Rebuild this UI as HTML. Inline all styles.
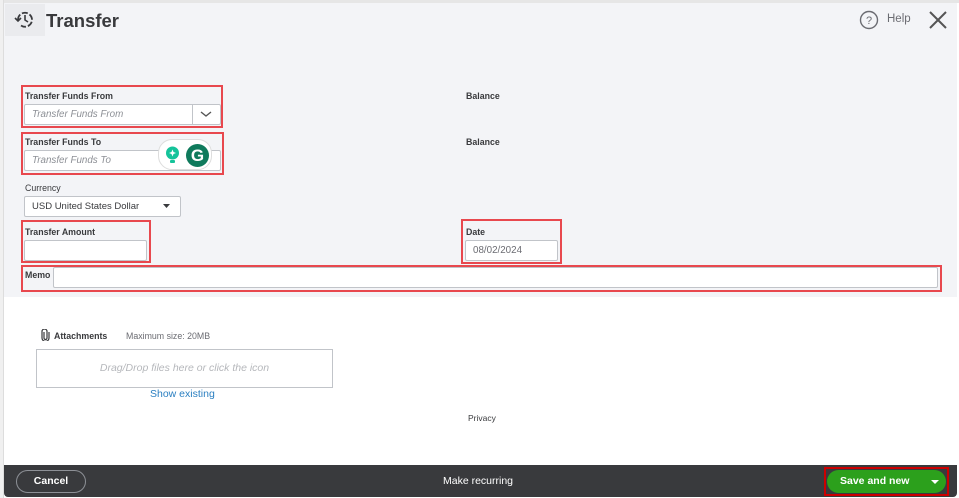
<!DOCTYPE html>
<html><head><meta charset="utf-8"><style>
*{box-sizing:border-box;margin:0;padding:0}
body{width:959px;height:498px;background:#fff;font-family:"Liberation Sans",sans-serif;position:relative;overflow:hidden;color:#393a3d}
.a{position:absolute;white-space:nowrap}
.top{left:4px;top:3px;width:953px;height:294px;background:#f3f4f7}
.lbl{font-size:8.8px;font-weight:bold;color:#393a3d}
.in{background:#fff;border:1px solid #c1c4c9;border-radius:2px}
.ph{font-size:9.8px;font-style:italic;color:#8d9096}
.red{border:2px solid #e8484e}
</style></head><body>
<div class="a" style="left:0;top:0;width:959px;height:3px;background:#e6e6e6"></div>
<div class="a" style="left:0;top:0;width:4px;height:498px;background:#f0f0f0;border-right:1px solid #ddd"></div>
<div class="a top"></div>
<div class="a" style="left:5px;top:4px;width:40px;height:32px;background:#eaebee"></div>
<svg class="a" style="left:14px;top:9px" width="22" height="20" viewBox="0 0 22 20"><path d="M4 11a7 7 0 1 1 3 5.5" fill="none" stroke="#393a3d" stroke-width="1.8" stroke-dasharray="6 2"/><path d="M11 6v5l3 2" fill="none" stroke="#393a3d" stroke-width="1.6"/><path d="M1 9l3 3 3-3" fill="none" stroke="#393a3d" stroke-width="1.6"/></svg>
<div class="a" style="left:46px;top:10px;font-size:18.5px;font-weight:bold;color:#393a3d">Transfer</div>
<svg class="a" style="left:859px;top:10px" width="20" height="20" viewBox="0 0 20 20"><circle cx="10" cy="10" r="8.5" fill="none" stroke="#6b6c72" stroke-width="1.4"/><text x="10" y="14" text-anchor="middle" font-size="11" font-family="Liberation Sans" fill="#6b6c72">?</text></svg>
<div class="a" style="left:887px;top:13px;font-size:11.5px;color:#6b6c72">Help</div>
<svg class="a" style="left:928px;top:10px" width="20" height="20" viewBox="0 0 20 20"><path d="M2 2l16 16M18 2L2 18" stroke="#555" stroke-width="2"/></svg>

<div class="a red" style="left:21px;top:85px;width:202px;height:43px"></div>
<div class="a lbl" style="left:25px;top:91px">Transfer Funds From</div>
<div class="a in" style="left:24px;top:104px;width:197px;height:21px"></div>
<div class="a ph" style="left:32px;top:109px">Transfer Funds From</div>
<div class="a" style="left:192px;top:105px;width:1px;height:19px;background:#c1c4c9"></div>
<svg class="a" style="left:200px;top:110px" width="12" height="8"><path d="M1 2l5 4 5-4" fill="none" stroke="#555" stroke-width="1.4"/></svg>

<div class="a red" style="left:21px;top:132px;width:203px;height:43px"></div>
<div class="a lbl" style="left:25px;top:137px">Transfer Funds To</div>
<div class="a in" style="left:24px;top:150px;width:197px;height:21px"></div>
<div class="a ph" style="left:32px;top:155px">Transfer Funds To</div>
<div class="a" style="left:158px;top:139px;width:54px;height:31px;background:#fff;border:1px solid #ddd;border-radius:14px"></div>
<svg class="a" style="left:165px;top:146px" width="15" height="18"><circle cx="7.5" cy="7" r="6.5" fill="#15c39a"/><path d="M7.5 3.5l1 2.5 2.5 1-2.5 1-1 2.5-1-2.5-2.5-1 2.5-1z" fill="#fff"/><rect x="5" y="14" width="5" height="3" rx="1" fill="#15c39a"/></svg>
<div class="a" style="left:186px;top:144px;width:23px;height:23px;border-radius:50%;background:#0f7a5c;color:#fff;font-weight:bold;font-size:17px;text-align:center;line-height:23px">G</div>

<div class="a lbl" style="left:466px;top:91px">Balance</div>
<div class="a lbl" style="left:466px;top:137px">Balance</div>

<div class="a" style="left:25px;top:183px;font-size:8.8px;color:#393a3d">Currency</div>
<div class="a in" style="left:24px;top:196px;width:157px;height:21px"></div>
<div class="a" style="left:32px;top:201px;font-size:9.5px;color:#393a3d">USD United States Dollar</div>
<svg class="a" style="left:163px;top:204px" width="7" height="5"><path d="M0 0h7l-3.5 4z" fill="#393a3d"/></svg>

<div class="a red" style="left:21px;top:220px;width:130px;height:43px"></div>
<div class="a lbl" style="left:25px;top:227px">Transfer Amount</div>
<div class="a in" style="left:24px;top:240px;width:123px;height:21px"></div>

<div class="a red" style="left:461px;top:219px;width:101px;height:45px"></div>
<div class="a lbl" style="left:466px;top:227px">Date</div>
<div class="a in" style="left:465px;top:240px;width:93px;height:21px"></div>
<div class="a" style="left:473px;top:245px;font-size:9.8px;color:#6b6c72">08/02/2024</div>

<div class="a red" style="left:21px;top:265px;width:921px;height:27px"></div>
<div class="a lbl" style="left:25px;top:270px">Memo</div>
<div class="a in" style="left:53px;top:267px;width:885px;height:21px"></div>

<svg class="a" style="left:41px;top:329px" width="9" height="12"><path d="M3 3v6a1.5 1.5 0 0 0 3 0V2.5a2.5 2.5 0 0 0-5 0V9a3.5 3.5 0 0 0 7 0V3" fill="none" stroke="#393a3d" stroke-width="1.2"/></svg>
<div class="a" style="left:54px;top:331px;font-size:8.8px;font-weight:bold;color:#393a3d">Attachments</div>
<div class="a" style="left:126px;top:331px;font-size:8.8px;color:#6b6c72">Maximum size: 20MB</div>
<div class="a" style="left:36px;top:349px;width:297px;height:39px;border:1px solid #c1c4c9"></div>
<div class="a" style="left:36px;top:362px;width:297px;text-align:center;font-size:10.5px;font-style:italic;color:#b5b7bb">Drag/Drop files here or click the icon</div>
<div class="a" style="left:150px;top:388px;font-size:10.5px;color:#2a7fc1">Show existing</div>
<div class="a" style="left:468px;top:413px;font-size:8.5px;color:#393a3d">Privacy</div>

<div class="a" style="left:4px;top:465px;width:953px;height:32px;background:#393a3d;border-radius:0 0 4px 4px"></div>
<div class="a" style="left:16px;top:470px;width:70px;height:23px;border:1px solid #8d9096;border-radius:12px;color:#fff;font-size:10.5px;font-weight:bold;text-align:center;line-height:21px">Cancel</div>
<div class="a" style="left:443px;top:475px;font-size:10.5px;color:#fff">Make recurring</div>
<div class="a" style="left:824px;top:467px;width:125px;height:29px;border:2px solid #c00"></div>
<div class="a" style="left:827px;top:470px;width:119px;height:23px;background:#2ca01c;border-radius:12px;color:#fff;font-size:10.5px;font-weight:bold;line-height:23px;padding-left:13px">Save and new</div>
<svg class="a" style="left:931px;top:480px" width="8" height="5"><path d="M0 0h8l-4 4z" fill="#fff"/></svg>
</body></html>
